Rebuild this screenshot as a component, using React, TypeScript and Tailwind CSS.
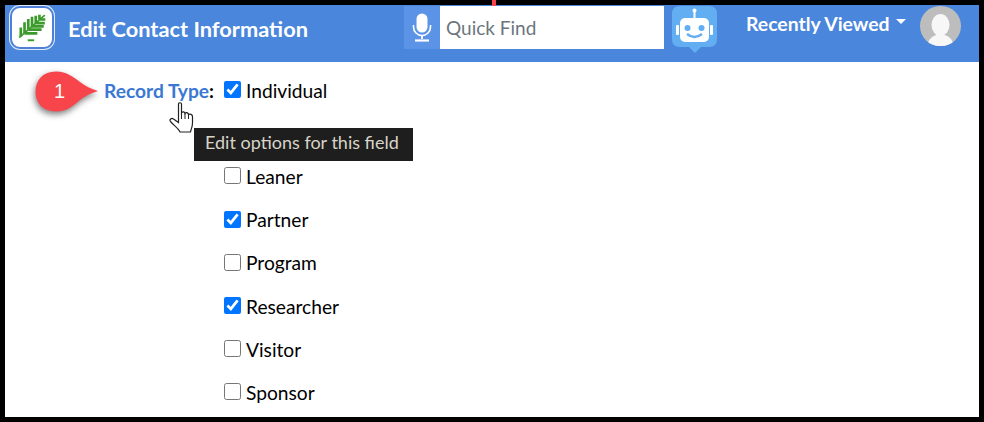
const options = [
  { name: "Leaner", checked: false },
  { name: "Partner", checked: true },
  { name: "Program", checked: false },
  { name: "Researcher", checked: true },
  { name: "Visitor", checked: false },
  { name: "Sponsor", checked: false },
];

function Logo() {
  return (
    <div className="flex h-[43px] w-[44px] items-center justify-center rounded-[10px] border-2 border-[#4f7fd6] bg-white shadow-[0_0_0_1px_#dcebff]">
      <svg width="32" height="32" viewBox="0 0 30 30" fill="none" stroke="#3a9a2a" strokeWidth="2.5">
        <path d="M3 24 L27 3" strokeWidth="1.6" />
        <path d="M22 7 V2.5 M18.5 10.5 V3.5 M15 13.5 V4.5 M11.5 16.5 V6.5 M8 20 V9.5 M4.5 23 V14.5" />
        <path d="M22 7 H27.5 M18.5 10.5 H27 M15 13.5 H26 M11.5 16.5 H24 M8 20 H20" />
        <path d="M11 26.5 H17" strokeWidth="1.8" />
      </svg>
    </div>
  );
}

function Mic() {
  return (
    <svg width="20" height="29" viewBox="0 0 20 29" fill="none">
      <rect x="4.5" y="0.5" width="11" height="19" rx="5.5" fill="white" />
      <path d="M1.5 12 V14 a8.5 8.5 0 0 0 17 0 V12" stroke="white" strokeWidth="1.6" />
      <path d="M10 22 V26" stroke="white" strokeWidth="1.8" />
      <path d="M3 27.5 H17" stroke="white" strokeWidth="2.2" />
    </svg>
  );
}

function Robot() {
  return (
    <svg width="45" height="47" viewBox="0 0 45 47">
      <path d="M8 0 H37 Q45 0 45 8 V33 Q45 41 37 41 H29 L23 47 L17 41 H8 Q0 41 0 33 V8 Q0 0 8 0 Z" fill="#63aef2" />
      <circle cx="22.5" cy="4.5" r="2" fill="white" />
      <rect x="21.5" y="5" width="2" height="8" fill="white" />
      <rect x="8" y="12" width="29" height="24" rx="5" fill="white" />
      <rect x="4" y="19" width="3" height="10" rx="1" fill="white" />
      <rect x="38" y="19" width="3" height="10" rx="1" fill="white" />
      <circle cx="15.5" cy="22" r="3" fill="#63aef2" />
      <circle cx="29.5" cy="22" r="3" fill="#63aef2" />
      <path d="M15 28 Q22.5 34 30 28" fill="none" stroke="#63aef2" strokeWidth="2.4" />
    </svg>
  );
}

function Avatar() {
  return (
    <div className="h-[40px] w-[41px] overflow-hidden rounded-full bg-[#bdbdbd]">
      <svg width="41" height="40" viewBox="0 0 41 40">
        <ellipse cx="20.5" cy="19" rx="9" ry="11" fill="#f7f7f7" />
        <path d="M7 40 Q9 31 16 29 H25 Q32 31 34 40 Z" fill="#f7f7f7" />
      </svg>
    </div>
  );
}

function Hand() {
  return (
    <svg width="26" height="31" viewBox="0 0 26 31" className="absolute left-[164px] top-[97px]">
      <path
        d="M9.5 2 C9.5 0.3 12.5 0.3 12.5 2 V11 C13.5 9.5 15.5 9.5 16 11.5 C17 10 19 10.5 19.5 12.5 C21 11.5 23.5 12.5 23.5 14.5 V21 C23.5 25 22 27 21.5 30 H11 C9.5 26.5 5.5 24 1.5 19.5 C0 17.5 2.5 15.5 4.5 17 L9.5 20.5 Z"
        fill="white"
        stroke="#222"
        strokeWidth="1.2"
      />
      <path d="M12.5 11 V17 M16 11.5 V17 M19.5 12.5 V17" stroke="#222" strokeWidth="1" fill="none" />
    </svg>
  );
}

function Callout() {
  return (
    <div className="absolute left-[30px] top-[66px] h-[42px] w-[63px]">
      <svg width="63" height="42" viewBox="0 0 63 42" className="drop-shadow-[-1px_3px_3px_rgba(0,0,0,0.5)]">
        <path d="M21 0.5 C32 0.5 38 6 45 11 C50 15 56 18 63 20 C56 22 50 25 45 29 C38 35 32 40.5 21 40.5 C8 40.5 0.5 32 0.5 21 C0.5 9 8 0.5 21 0.5 Z" fill="#f8444b" />
      </svg>
      <span className="absolute left-[19px] top-[9px] text-[20px] leading-[22px] text-white [font-family:'Liberation_Sans',sans-serif]">1</span>
    </div>
  );
}

function Option({ name, checked }: { name: string; checked: boolean }) {
  return (
    <label className="flex h-[43.2px] items-center gap-[5px]">
      <input type="checkbox" defaultChecked={checked} className="h-[17px] w-[17px] accent-[#0075ff]" />
      <span className="mt-[3px]">{name}</span>
    </label>
  );
}

export default function App() {
  return (
    <div className="relative h-[422px] w-[984px] border-[5px] border-black bg-white text-[19.2px] text-black [font-family:Lato,sans-serif]">
      <header className="flex h-[57px] bg-[#4a86db] pl-[5px] pt-[1px]">
        <Logo />
        <h1 className="ml-[14px] mt-[8px] text-[21.8px] font-bold leading-[30px] text-white">Edit Contact Information</h1>
        <div className="ml-[96px] flex h-[43px] w-[260px] shrink-0">
          <div className="flex w-[36px] items-center justify-center bg-[#5b93e6]">
            <Mic />
          </div>
          <div className="flex-1 bg-white pl-[6px] text-[19px] leading-[43px] text-[#6c757d]">Quick Find</div>
        </div>
        <div className="ml-[8px]">
          <Robot />
        </div>
        <div className="ml-[29px] flex h-[35px] items-center text-[19.4px] font-bold text-white">
          Recently Viewed
          <span className="mb-[4px] ml-[6px] h-0 w-0 border-x-[5.5px] border-t-[5px] border-x-transparent border-t-white" />
        </div>
        <div className="ml-[14px]">
          <Avatar />
        </div>
      </header>

      <main className="flex pl-[99px] pt-[6px]">
        <div className="mt-[12px] w-[120px] font-bold leading-[22px]">
          <span className="text-[#3a78d4]">Record Type</span>:
        </div>
        <div className="flex flex-col">
          <Option name="Individual" checked />
          <div className="h-[43.2px]" />
          {options.map((o) => (
            <Option key={o.name} name={o.name} checked={o.checked} />
          ))}
        </div>
      </main>

      <div className="absolute left-[189px] top-[123px] h-[33px] w-[219px] bg-[#1e1e1e] pl-[11px] pt-[3px] text-[18px] leading-[23px] text-[#d8d4c8]">
        Edit options for this field
      </div>
      <Callout />
      <Hand />
      <div className="absolute left-[487px] top-[-5px] h-[6px] w-[4px] bg-[#f8444b]" />
    </div>
  );
}
